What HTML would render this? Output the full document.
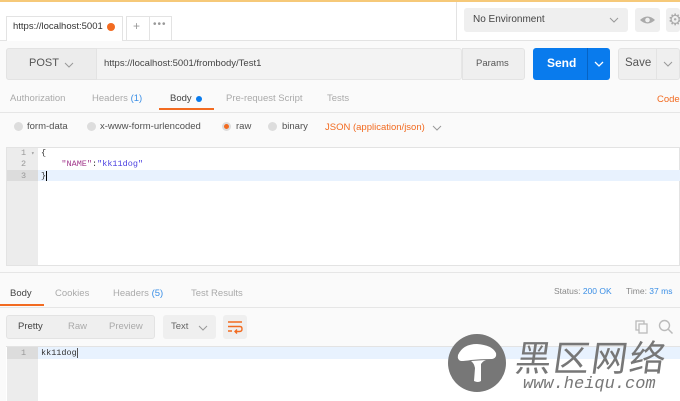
<!DOCTYPE html>
<html><head><meta charset="utf-8"><style>
*{box-sizing:border-box;margin:0;padding:0}
body{width:680px;height:401px;overflow:hidden;background:#fff;font-family:"Liberation Sans","DejaVu Sans",sans-serif;font-size:10px;color:#505050;position:relative}
.a{position:absolute}
.mono{font-family:"Liberation Mono","DejaVu Sans Mono",monospace;font-size:8.5px}
.radio{position:absolute;width:9px;height:9px;border-radius:50%;background:#ddd;top:122px}
.chev{position:absolute;width:10px;height:6px}
</style></head><body>
<div class="a" style="left:0;top:0;width:680px;height:2px;background:#f6c979"></div>
<div class="a" style="left:0;top:40px;width:680px;height:1px;background:#e3e3e3"></div>
<div class="a" style="left:456px;top:2px;width:1px;height:38px;background:#e3e3e3"></div>
<div class="a" style="left:6px;top:16px;width:117px;height:25px;border:1px solid #e3e3e3;border-bottom:none;background:#fff"></div>
<div class="a" style="left:13px;top:21px;font-size:9.5px;color:#333">https://localhost:5001</div>
<div class="a" style="left:107px;top:23px;width:8px;height:8px;border-radius:50%;background:#f26b21"></div>
<div class="a" style="left:126px;top:16px;width:46px;height:24px;border:1px solid #e3e3e3;border-bottom:none"></div>
<div class="a" style="left:149px;top:16px;width:1px;height:24px;background:#e3e3e3"></div>
<div class="a" style="left:133px;top:19px;font-size:12px;color:#999">+</div>
<div class="a" style="left:153px;top:19px;font-size:10px;color:#999;letter-spacing:1px">•••</div>
<div class="a" style="left:464px;top:8px;width:164px;height:24px;background:#efefef;border-radius:3px"></div>
<div class="a" style="left:473px;top:14px;font-size:10px;color:#444">No Environment</div>
<svg class="chev" style="left:609px;top:17px" viewBox="0 0 10 6"><path d="M1 1L5 5L9 1" stroke="#999" fill="none"/></svg>
<div class="a" style="left:635px;top:8px;width:25px;height:24px;background:#efefef;border-radius:3px"></div>
<svg class="a" style="left:638px;top:14px" width="19" height="12"><path d="M2 6Q9.5 -1 17 6Q9.5 13 2 6Z" fill="#aaa"/><circle cx="9.5" cy="6" r="2.3" fill="#efefef"/></svg>
<div class="a" style="left:666px;top:8px;width:14px;height:24px;background:#efefef;border-radius:3px"></div>
<div class="a" style="left:668px;top:10px;font-size:16px;color:#aaa">⚙</div>

<div class="a" style="left:0;top:41px;width:680px;height:360px;background:#fafafa"></div>
<div class="a" style="left:6px;top:48px;width:456px;height:32px;background:#f3f3f3;border:1px solid #e6e6e6;border-radius:3px"></div>
<div class="a" style="left:6px;top:48px;width:91px;height:32px;background:#ececec;border:1px solid #e3e3e3;border-radius:3px 0 0 3px"></div>
<div class="a" style="left:29px;top:57px;font-size:11px;color:#555">POST</div>
<svg class="chev" style="left:64px;top:62px" viewBox="0 0 10 6"><path d="M1 1L5 5L9 1" stroke="#999" fill="none"/></svg>
<div class="a" style="left:104px;top:58px;font-size:9.5px;color:#444">https://localhost:5001/frombody/Test1</div>
<div class="a" style="left:462px;top:48px;width:63px;height:32px;background:#efefef;border:1px solid #e3e3e3;border-radius:0 3px 3px 0"></div>
<div class="a" style="left:476px;top:58px;font-size:9.5px;color:#555">Params</div>
<div class="a" style="left:533px;top:48px;width:77px;height:32px;background:#097bed;border-radius:3px"></div>
<div class="a" style="left:587px;top:48px;width:1px;height:32px;background:#0663c4"></div>
<div class="a" style="left:547px;top:56px;font-size:12px;color:#fff;font-weight:bold">Send</div>
<svg class="chev" style="left:594px;top:61px" viewBox="0 0 10 6"><path d="M1 1L5 5L9 1" stroke="#fff" stroke-width="1.3" fill="none"/></svg>
<div class="a" style="left:618px;top:48px;width:62px;height:32px;background:#efefef;border:1px solid #e3e3e3;border-radius:3px"></div>
<div class="a" style="left:656px;top:48px;width:1px;height:32px;background:#e3e3e3"></div>
<div class="a" style="left:625px;top:57px;font-size:11.5px;color:#555">Save</div>
<svg class="chev" style="left:663px;top:61px" viewBox="0 0 10 6"><path d="M1 1L5 5L9 1" stroke="#999" fill="none"/></svg>

<div class="a" style="left:10px;top:93px;color:#aaa;font-size:9.5px">Authorization</div>
<div class="a" style="left:92px;top:93px;color:#aaa;font-size:9.5px">Headers <span style="color:#3b8fe6">(1)</span></div>
<div class="a" style="left:170px;top:93px;color:#444;font-size:9.5px">Body</div>
<div class="a" style="left:196px;top:96px;width:6px;height:6px;border-radius:50%;background:#097bed"></div>
<div class="a" style="left:159px;top:108px;width:55px;height:2px;background:#f26b21"></div>
<div class="a" style="left:226px;top:93px;color:#aaa;font-size:9.5px">Pre-request Script</div>
<div class="a" style="left:327px;top:93px;color:#aaa;font-size:9.5px">Tests</div>
<div class="a" style="left:657px;top:94px;color:#f26b21;font-size:9.5px">Code</div>
<div class="a" style="left:0;top:112px;width:680px;height:1px;background:#e6e6e6"></div>

<div class="radio" style="left:14px"></div><div class="a" style="left:27px;top:121px;font-size:9.5px">form-data</div>
<div class="radio" style="left:87px"></div><div class="a" style="left:100px;top:121px;font-size:9.5px">x-www-form-urlencoded</div>
<div class="radio" style="left:222px;background:#f26b21;border:2px solid #ddd"></div><div class="a" style="left:236px;top:121px;font-size:9.5px">raw</div>
<div class="radio" style="left:268px"></div><div class="a" style="left:282px;top:121px;font-size:9.5px">binary</div>
<div class="a" style="left:325px;top:122px;font-size:9.5px;color:#f26b21">JSON (application/json)</div>
<svg class="chev" style="left:432px;top:125px" viewBox="0 0 10 6"><path d="M1 1L5 5L9 1" stroke="#999" fill="none"/></svg>

<div class="a" style="left:6px;top:147px;width:674px;height:119px;background:#fff;border:1px solid #e3e3e3"></div>
<div class="a" style="left:7px;top:148px;width:31px;height:117px;background:#ececec"></div>
<div class="a" style="left:7px;top:170px;width:31px;height:11px;background:#dcdcdc"></div>
<div class="a" style="left:38px;top:170px;width:642px;height:11px;background:#e8f2fe"></div>
<div class="a mono" style="left:21px;top:148px;color:#999;line-height:11.3px">1<br>2<br>3</div>
<div class="a mono" style="left:31px;top:148px;color:#999;font-size:6px;line-height:11.3px">▾</div>
<div class="a mono" style="left:41px;top:148px;color:#333;line-height:11.3px">{<br>&nbsp;&nbsp;&nbsp;&nbsp;<span style="color:#a2398c">"NAME"</span>:<span style="color:#4a3fe0">"kk11dog"</span><br>}<span style="border-left:1.5px solid #000"></span></div>

<div class="a" style="left:0;top:272px;width:680px;height:1px;background:#e6e6e6"></div>
<div class="a" style="left:10px;top:288px;color:#444;font-size:9.5px">Body</div>
<div class="a" style="left:0;top:304px;width:44px;height:2px;background:#f26b21"></div>
<div class="a" style="left:55px;top:288px;color:#aaa;font-size:9.5px">Cookies</div>
<div class="a" style="left:113px;top:288px;color:#aaa;font-size:9.5px">Headers <span style="color:#3b8fe6">(5)</span></div>
<div class="a" style="left:191px;top:288px;color:#aaa;font-size:9.5px">Test Results</div>
<div class="a" style="left:554px;top:286px;font-size:8.5px;color:#888">Status: <span style="color:#3b8fe6">200 OK</span></div>
<div class="a" style="left:626px;top:286px;font-size:8.5px;color:#888">Time: <span style="color:#3b8fe6">37 ms</span></div>
<div class="a" style="left:0;top:307px;width:680px;height:1px;background:#e6e6e6"></div>

<div class="a" style="left:6px;top:315px;width:149px;height:24px;background:#efefef;border:1px solid #e3e3e3;border-radius:3px"></div>
<div class="a" style="left:18px;top:321px;font-size:9.5px;color:#444">Pretty</div>
<div class="a" style="left:68px;top:321px;font-size:9.5px;color:#aaa">Raw</div>
<div class="a" style="left:109px;top:321px;font-size:9.5px;color:#aaa">Preview</div>
<div class="a" style="left:163px;top:315px;width:53px;height:24px;background:#efefef;border-radius:3px"></div>
<div class="a" style="left:171px;top:321px;font-size:9.5px;color:#666">Text</div>
<svg class="chev" style="left:198px;top:325px" viewBox="0 0 10 6"><path d="M1 1L5 5L9 1" stroke="#999" fill="none"/></svg>
<div class="a" style="left:223px;top:315px;width:24px;height:24px;background:#efefef;border-radius:3px"></div>
<svg class="a" style="left:227px;top:320px" width="16" height="14"><path d="M1 2H15M1 6.5H13Q15 6.5 15 9T12.5 11.5H8M10 9.5L8 11.5L10 13.5M1 11H5" stroke="#f26b21" stroke-width="1.4" fill="none"/></svg>
<svg class="a" style="left:635px;top:320px" width="14" height="14"><rect x="1" y="1" width="8" height="9" fill="none" stroke="#bbb" stroke-width="1.3"/><rect x="4" y="4" width="8" height="9" fill="#fafafa" stroke="#bbb" stroke-width="1.3"/></svg>
<svg class="a" style="left:658px;top:319px" width="16" height="16"><circle cx="6.5" cy="6.5" r="5" fill="none" stroke="#bbb" stroke-width="1.4"/><path d="M10 10L14.5 14.5" stroke="#bbb" stroke-width="1.5"/></svg>

<div class="a" style="left:6px;top:346px;width:674px;height:55px;background:#fff;border-top:1px solid #e3e3e3"></div>
<div class="a" style="left:7px;top:347px;width:31px;height:54px;background:#ececec"></div>
<div class="a" style="left:7px;top:347px;width:31px;height:12px;background:#dcdcdc"></div>
<div class="a" style="left:38px;top:347px;width:642px;height:12px;background:#e8f2fe"></div>
<div class="a mono" style="left:21px;top:348px;color:#999">1</div>
<div class="a mono" style="left:41px;top:348px;color:#333">kk11dog<span style="border-left:1px solid #555"></span></div>

<svg class="a" style="left:447px;top:333px" width="60" height="60"><circle cx="30" cy="30" r="29" fill="#777"/><path d="M11 22Q16 11 30 11Q45 12 49 20Q50 25 45 26Q33 26 24 27Q18 28 14 28Q10 27 11 22Z" fill="#fff"/><path d="M24 28Q27 30 28 35L27 48Q31 50 34 48L34 31Q36 28 39 27Z" fill="#fff"/></svg>
<div class="a" style="left:516px;top:336px;font-size:36px;color:#777;font-family:'Noto Sans CJK SC',sans-serif;letter-spacing:2px;line-height:40px;transform:skewX(-8deg)">黑区网络</div>
<div class="a" style="left:523px;top:375px;font-size:17px;color:#777;font-family:'Liberation Mono',monospace;font-style:italic">www.heiqu.com</div>
</body></html>
